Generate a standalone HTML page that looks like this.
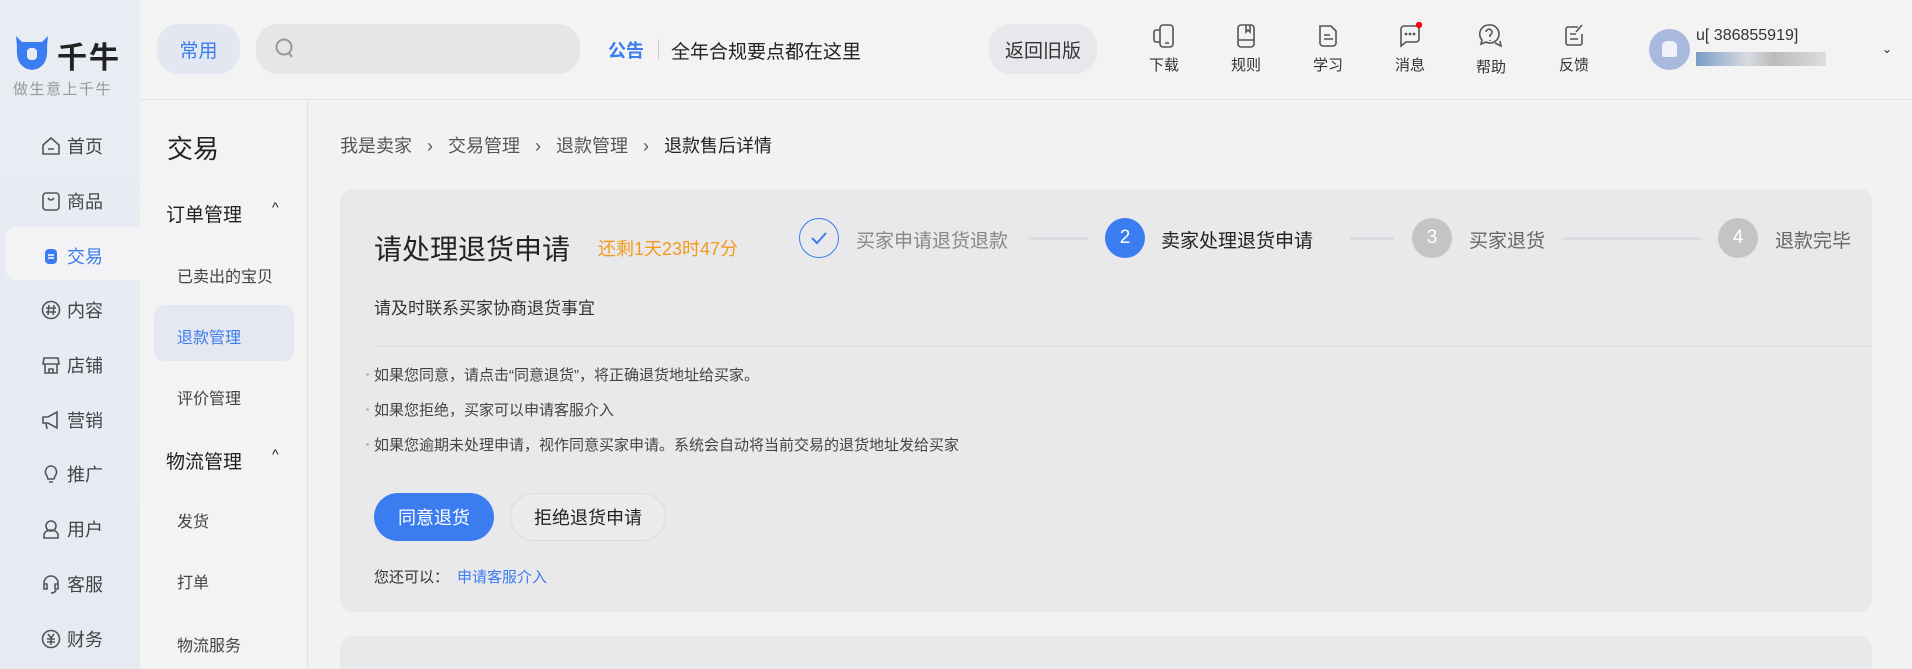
<!DOCTYPE html>
<html style="width:1912px;height:669px;overflow:hidden"><head><meta charset="utf-8">
<style>
*{margin:0;padding:0;box-sizing:border-box}
body{width:1912px;height:669px;overflow:hidden;background:#f2f2f3;font-family:"Liberation Sans","Noto Sans CJK SC",sans-serif;color:#333;position:relative}
.abs{position:absolute}
#nav{left:0;top:0;width:140px;height:669px;background:linear-gradient(180deg,#e8ecf3,#e6eaf3);}
#top{left:140px;top:0;width:1772px;height:100px;border-bottom:1px solid #e4e4e6;background:#f3f3f4}
.pill{position:absolute;border-radius:22px;background:#e7e8ec;font-size:19px;display:flex;align-items:center;justify-content:center}
.ti{position:absolute;width:60px;text-align:center;font-size:15px;color:#333}
.ti svg{display:block;margin:0 auto 4px}
.nv{position:absolute;left:40px;font-size:18px;color:#444;display:flex;align-items:center;gap:5px}
.nv svg{width:22px;height:22px}
#sub{left:140px;top:101px;width:168px;height:568px;border-right:1px solid #e3e3e5;background:#f3f3f4}
.s2{position:absolute;font-size:16px;color:#444}
.s1{position:absolute;left:26px;font-size:19px;color:#222}
.bc{font-size:18px;color:#555}
.card{background:#e9e9eb;border-radius:12px}
.step{position:absolute;font-size:19px;top:226px}
.circ{position:absolute;top:218px;width:40px;height:40px;border-radius:50%;color:#fff;font-size:19px;display:flex;align-items:center;justify-content:center}
.ln{position:absolute;top:237px;height:3px;background:#dcdde1}
.li{position:absolute;left:374px;font-size:15px;color:#444}
.li:before{content:"";position:absolute;left:-8px;top:9px;width:3px;height:3px;border-radius:50%;background:#bbb}
</style></head><body>
<div id="nav" class="abs">
  <svg class="abs" style="left:13px;top:34px" width="38" height="38" viewBox="0 0 38 38"><path d="M3 2 L9 8 L29 8 L35 2 L34 12 Q36 34 19 36 Q2 34 4 12 Z" fill="#3b7cf0"/><rect x="14" y="14" width="10" height="12" rx="4" fill="#e8ecf3"/></svg>
  <div class="abs" style="left:57px;top:33px;font-size:30px;font-weight:bold;color:#222;letter-spacing:2px">千牛</div>
  <div class="abs" style="left:13px;top:78px;font-size:15px;color:#999;letter-spacing:1.5px">做生意上千牛</div>
  <div class="abs" style="left:5px;top:227px;width:135px;height:53px;background:#f3f3f5;border-radius:12px 0 0 12px"></div>
  <div class="nv" style="top:133px"><svg viewBox="0 0 22 22" fill="none" stroke="#555" stroke-width="1.6"><path d="M3 10 L11 3 L19 10 V19 H3Z M8 14 H14"/></svg>首页</div>
  <div class="nv" style="top:188px"><svg viewBox="0 0 22 22" fill="none" stroke="#555" stroke-width="1.6"><rect x="3" y="3" width="16" height="17" rx="3"/><path d="M8 8 Q11 12 14 8"/></svg>商品</div>
  <div class="nv" style="top:243px;color:#3b7cf0"><svg viewBox="0 0 22 22"><rect x="5" y="4" width="12" height="15" rx="4" fill="#3b7cf0"/><path d="M8 10h6M8 13h6" stroke="#fff" stroke-width="1.5"/></svg>交易</div>
  <div class="nv" style="top:297px"><svg viewBox="0 0 22 22" fill="none" stroke="#555" stroke-width="1.6"><circle cx="11" cy="11" r="8.5"/><path d="M9 6 L8 16 M14 6 L13 16 M6 9h10M6 13h10"/></svg>内容</div>
  <div class="nv" style="top:352px"><svg viewBox="0 0 22 22" fill="none" stroke="#555" stroke-width="1.6"><path d="M4 4h14l1 6H3Z M5 10v9h12v-9 M9 19v-4h4v4"/></svg>店铺</div>
  <div class="nv" style="top:407px"><svg viewBox="0 0 22 22" fill="none" stroke="#555" stroke-width="1.6"><path d="M3 8h5l9-5v16l-9-5H3Z M6 14l1 6"/></svg>营销</div>
  <div class="nv" style="top:461px"><svg viewBox="0 0 22 22" fill="none" stroke="#555" stroke-width="1.6"><path d="M11 3a6 6 0 0 1 4 10l-1 3h-6l-1-3a6 6 0 0 1 4-10Z M9 19h4"/></svg>推广</div>
  <div class="nv" style="top:516px"><svg viewBox="0 0 22 22" fill="none" stroke="#555" stroke-width="1.6"><circle cx="11" cy="8" r="5"/><path d="M4 20v-3a7 5 0 0 1 14 0v3Z"/></svg>用户</div>
  <div class="nv" style="top:571px"><svg viewBox="0 0 22 22" fill="none" stroke="#555" stroke-width="1.6"><path d="M4 13v-3a7 7 0 0 1 14 0v3 M4 11h3v5H4Z M15 11h3v5h-3Z M16 17q-1 3-5 3"/></svg>客服</div>
  <div class="nv" style="top:626px"><svg viewBox="0 0 22 22" fill="none" stroke="#555" stroke-width="1.6"><circle cx="11" cy="11" r="8.5"/><path d="M8 6l3 4 3-4M7 11h8M7 14h8M11 10v7"/></svg>财务</div>
</div>
<div id="top" class="abs">
  <div class="pill" style="left:17px;top:24px;width:83px;height:50px;background:#e3e7f1;color:#3b7cf0">常用</div>
  <div class="pill" style="left:116px;top:24px;width:324px;height:50px;background:#e6e6e9;justify-content:flex-start;padding-left:18px"><svg width="22" height="24" viewBox="0 0 22 24" fill="none" stroke="#999" stroke-width="2"><circle cx="10" cy="10" r="7.5"/><path d="M15 16l3 4"/></svg></div>
  <div class="abs" style="left:468px;top:37px;font-size:18px;font-weight:bold;color:#3b7cf0">公告</div>
  <div class="abs" style="left:518px;top:39px;width:1px;height:20px;background:#ccc"></div>
  <div class="abs" style="left:531px;top:37px;font-size:19px;color:#222">全年合规要点都在这里</div>
  <div class="pill" style="left:849px;top:24px;width:108px;height:50px;color:#333">返回旧版</div>
  <div class="ti" style="left:994px;top:22px"><svg width="26" height="28" viewBox="0 0 26 28" fill="none" stroke="#555" stroke-width="1.6"><rect x="9" y="3" width="13" height="22" rx="3"/><path d="M9 8H5a2 2 0 0 0-2 2v8a2 2 0 0 0 2 2h4 M14 21h4"/></svg>下载</div>
  <div class="ti" style="left:1076px;top:22px"><svg width="26" height="28" viewBox="0 0 26 28" fill="none" stroke="#555" stroke-width="1.6"><rect x="5" y="3" width="16" height="22" rx="3"/><path d="M5 18h16 M13 3v7l2-2 2 2V3"/></svg>规则</div>
  <div class="ti" style="left:1158px;top:22px"><svg width="26" height="28" viewBox="0 0 26 28" fill="none" stroke="#555" stroke-width="1.6"><path d="M5 4h11l5 5v12a3 3 0 0 1-3 3H8a3 3 0 0 1-3-3Z M9 13h6 M9 17h9"/></svg>学习</div>
  <div class="ti" style="left:1240px;top:22px"><svg width="26" height="28" viewBox="0 0 26 28" fill="none" stroke="#555" stroke-width="1.6"><path d="M4 7a3 3 0 0 1 3-3h12a3 3 0 0 1 3 3v10a3 3 0 0 1-3 3H9l-5 4Z"/><circle cx="9" cy="12" r=".6" fill="#555"/><circle cx="13" cy="12" r=".6" fill="#555"/><circle cx="17" cy="12" r=".6" fill="#555"/><circle cx="22" cy="3" r="3.2" fill="#f01" stroke="none"/></svg>消息</div>
  <div class="ti" style="left:1321px;top:22px"><svg width="28" height="30" viewBox="0 0 28 30" fill="none" stroke="#555" stroke-width="1.6"><path d="M12 3a9 9 0 0 0-7 15l-1 4 5-2a9 9 0 1 0 3-17Z M18 21l6 3-1-5"/><path d="M9 10a3 3 0 1 1 4 3v2 M13 18v1"/></svg>帮助</div>
  <div class="ti" style="left:1404px;top:22px"><svg width="26" height="28" viewBox="0 0 26 28" fill="none" stroke="#555" stroke-width="1.6"><path d="M17 5H7a2 2 0 0 0-2 2v14a2 2 0 0 0 2 2h12a2 2 0 0 0 2-2v-9 M9 12h6 M9 17h8 M15 10l6-7"/></svg>反馈</div>
  <div class="abs" style="left:1509px;top:29px;width:41px;height:41px;border-radius:50%;background:#a9b9dd"><div class="abs" style="left:13px;top:12px;width:15px;height:16px;background:#eef1f7;border-radius:5px 5px 2px 2px"></div></div>
  <div class="abs" style="left:1556px;top:27px;font-size:16px;color:#333">u[ 386855919]</div>
  <div class="abs" style="left:1556px;top:52px;width:130px;height:14px;background:linear-gradient(90deg,#7a9cc6,#d8dbe1 40%,#bbb 60%,#ddd)"></div>
  <div class="abs" style="left:1742px;top:42px;font-size:12px;color:#222">&#8964;</div>
</div>
<div id="sub" class="abs">
  <div class="abs" style="left:27px;top:28px;font-size:26px;color:#222">交易</div>
  <div class="s1" style="top:99px">订单管理</div><div class="abs" style="left:132px;top:98px;font-size:14px;color:#222">^</div>
  <div class="s2" style="left:37px;top:162px">已卖出的宝贝</div>
  <div class="abs" style="left:14px;top:204px;width:140px;height:56px;background:#e5e8f0;border-radius:10px"></div>
  <div class="s2" style="left:37px;top:223px;color:#3b7cf0">退款管理</div>
  <div class="s2" style="left:37px;top:284px">评价管理</div>
  <div class="s1" style="top:346px">物流管理</div><div class="abs" style="left:132px;top:345px;font-size:14px;color:#222">^</div>
  <div class="s2" style="left:37px;top:407px">发货</div>
  <div class="s2" style="left:37px;top:468px">打单</div>
  <div class="s2" style="left:37px;top:531px">物流服务</div>
</div>
<div class="abs bc" style="left:340px;top:132px">我是卖家 <span style="margin:0 10px">›</span> 交易管理 <span style="margin:0 10px">›</span> 退款管理 <span style="margin:0 10px">›</span> <span style="color:#222">退款售后详情</span></div>
<div class="abs card" style="left:340px;top:189px;width:1532px;height:423px"></div>
<div class="abs" style="left:340px;top:636px;width:1532px;height:33px;background:#e9e9eb;border-radius:12px 12px 0 0"></div>
<div class="abs" style="left:374px;top:228px;font-size:28px;color:#222">请处理退货申请</div>
<div class="abs" style="left:598px;top:235px;font-size:18px;color:#f39a1a">还剩1天23时47分</div>
<div class="circ" style="left:799px;border:1.5px solid #3b7cf0;background:none"><svg width="18" height="14" viewBox="0 0 18 14" fill="none" stroke="#3b7cf0" stroke-width="2"><path d="M2 7l5 5 9-10"/></svg></div>
<div class="step" style="left:856px;color:#888">买家申请退货退款</div>
<div class="ln" style="left:1028px;width:61px"></div>
<div class="circ" style="left:1105px;background:#3b7cf0">2</div>
<div class="step" style="left:1161px;color:#222">卖家处理退货申请</div>
<div class="ln" style="left:1350px;width:44px"></div>
<div class="circ" style="left:1412px;background:#c4c4c6">3</div>
<div class="step" style="left:1469px;color:#666">买家退货</div>
<div class="ln" style="left:1563px;width:138px"></div>
<div class="circ" style="left:1718px;background:#c4c4c6">4</div>
<div class="step" style="left:1775px;color:#666">退款完毕</div>
<div class="abs" style="left:374px;top:294px;font-size:17px;color:#333">请及时联系买家协商退货事宜</div>
<div class="abs" style="left:374px;top:346px;width:1498px;height:1px;background:#dadadd"></div>
<div class="li" style="top:364px">如果您同意，请点击“同意退货”，将正确退货地址给买家。</div>
<div class="li" style="top:399px">如果您拒绝，买家可以申请客服介入</div>
<div class="li" style="top:434px">如果您逾期未处理申请，视作同意买家申请。系统会自动将当前交易的退货地址发给买家</div>
<div class="abs" style="left:374px;top:493px;width:120px;height:48px;border-radius:24px;background:#3b7cf0;color:#fff;font-size:18px;display:flex;align-items:center;justify-content:center">同意退货</div>
<div class="abs" style="left:510px;top:493px;width:156px;height:48px;border-radius:24px;border:1px solid #dcdcde;background:#ebebed;color:#222;font-size:18px;display:flex;align-items:center;justify-content:center">拒绝退货申请</div>
<div class="abs" style="left:374px;top:566px;font-size:15px;color:#333">您还可以：<span style="color:#3b7cf0;margin-left:8px">申请客服介入</span></div>
</body></html>
